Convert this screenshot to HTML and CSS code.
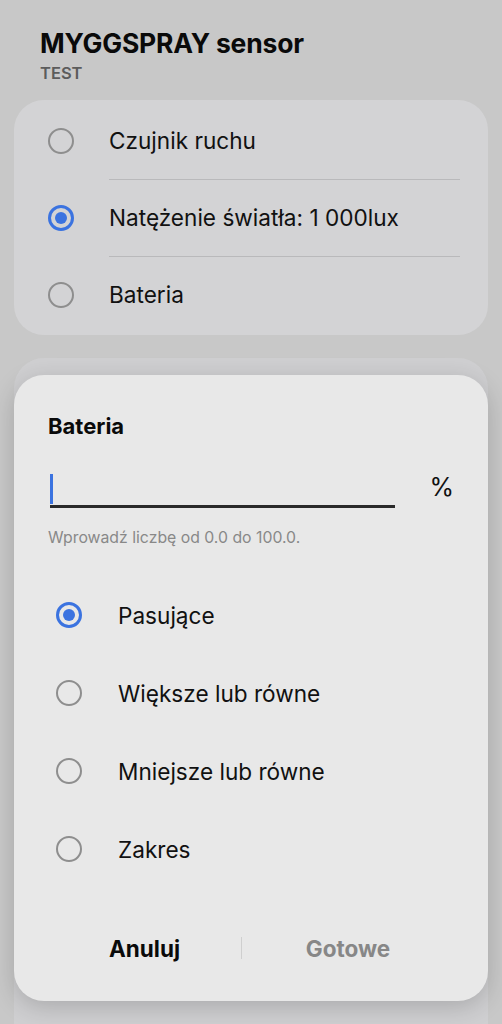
FILE: index.html
```html
<!DOCTYPE html>
<html lang="pl">
<head>
<meta charset="utf-8">
<link rel="stylesheet" href="styles.css">
</head>
<body>
<div class="page">
  <header class="head">
    <h1 class="title">MYGGSPRAY sensor</h1>
    <div class="sub">TEST</div>
  </header>
  <section class="card">
    <div class="row"><span class="radio"></span><span class="label">Czujnik ruchu</span></div>
    <div class="row"><span class="radio on"></span><span class="label">Natężenie światła: 1 000lux</span></div>
    <div class="row"><span class="radio"></span><span class="label">Bateria</span></div>
  </section>
  <section class="card card2"></section>
</div>

<div class="dialog">
  <h2 class="dtitle">Bateria</h2>
  <div class="field">
    <div class="input"><span class="caret"></span></div>
    <span class="unit">%</span>
  </div>
  <div class="hint">Wprowadź liczbę od 0.0 do 100.0.</div>
  <div class="opts">
    <div class="opt"><span class="radio on"></span><span class="label">Pasujące</span></div>
    <div class="opt"><span class="radio"></span><span class="label">Większe lub równe</span></div>
    <div class="opt"><span class="radio"></span><span class="label">Mniejsze lub równe</span></div>
    <div class="opt"><span class="radio"></span><span class="label">Zakres</span></div>
  </div>
  <div class="actions">
    <button class="btn cancel">Anuluj</button>
    <span class="sep"></span>
    <button class="btn done">Gotowe</button>
  </div>
</div>
</body>
</html>
```
FILE: styles.css
```css
* { box-sizing: border-box; }
html, body { margin: 0; padding: 0; }
body {
  background: #c8c8c8;
  font-family: Inter, "Noto Sans", "Liberation Sans", sans-serif;
  color: #0a0a0a;
  width: 502px;
  height: 1024px;
  overflow: hidden;
  position: relative;
}
.page { padding: 0 14px; }
.head { padding: 27px 0 0 26px; height: 100px; }
.title { margin: 0; font-size: 26.5px; font-weight: 700; line-height: 32px; letter-spacing: -0.2px; }
.sub { margin-top: 4px; font-size: 16.5px; font-weight: 600; color: #5c5c5c; line-height: 20px; }

.card {
  background: #d3d3d5;
  border-radius: 30px;
  padding: 2px 28px 2px 34px;
}
.row {
  display: flex;
  align-items: center;
  height: 77px;
  position: relative;
}
.row + .row::before {
  content: "";
  position: absolute;
  left: 61px; right: 0; top: 0;
  height: 1px;
  background: #b9b9bb;
}
.radio {
  width: 26px; height: 26px;
  border-radius: 50%;
  border: 2px solid #8e8e8e;
  flex: none;
  position: relative;
}
.radio.on { border: 3px solid #3b73e0; }
.radio.on::after {
  content: "";
  position: absolute;
  left: 50%; top: 50%;
  width: 12px; height: 12px;
  margin: -6px 0 0 -6px;
  border-radius: 50%;
  background: #3b73e0;
}
.label { font-size: 22.6px; margin-left: 35px; color: #111; }
.card2 { margin-top: 23px; height: 700px; background: #cfcfd1; padding: 0; }

.dialog {
  position: absolute;
  left: 14px; top: 375px;
  width: 474px; height: 626px;
  background: #e8e8e8;
  border-radius: 30px;
  box-shadow: 0 6px 24px rgba(0,0,0,0.18);
  padding: 37px 34px 0 34px;
  display: flex;
  flex-direction: column;
}
.dtitle { margin: 0; font-size: 22px; font-weight: 700; line-height: 28px; color: #0a0a0a; }
.field { display: flex; align-items: flex-end; margin-top: 26px; }
.input {
  width: 346px; margin-left: 2px;
  height: 42px;
  border-bottom: 3px solid #2a2a2a;
  padding: 8px 0 0 0;
}
.caret { display: block; width: 3px; height: 30px; background: #3b73e0; }
.unit { font-size: 25px; margin: 0 0 6px 34px; line-height: 30px; color: #111; }
.hint { margin-top: 20px; font-size: 15.8px; color: #888; line-height: 20px; }
.opts { margin-top: 28px; padding-left: 8px; }
.opt { display: flex; align-items: center; height: 78px; }
.opt .label { margin-left: 36px; }
.actions {
  margin-top: auto;
  height: 100px;
  display: flex;
  align-items: center;
  padding-bottom: 6px;
}
.btn {
  background: none; border: none;
  font-family: inherit;
  font-size: 22.5px; font-weight: 700;
  padding: 0;
  text-align: center;
}
.cancel { color: #0a0a0a; width: 193px; flex: none; }
.done { color: #878787; flex: 1; }
.sep { width: 1px; height: 22px; background: #cfcfcf; flex: none; }
```
